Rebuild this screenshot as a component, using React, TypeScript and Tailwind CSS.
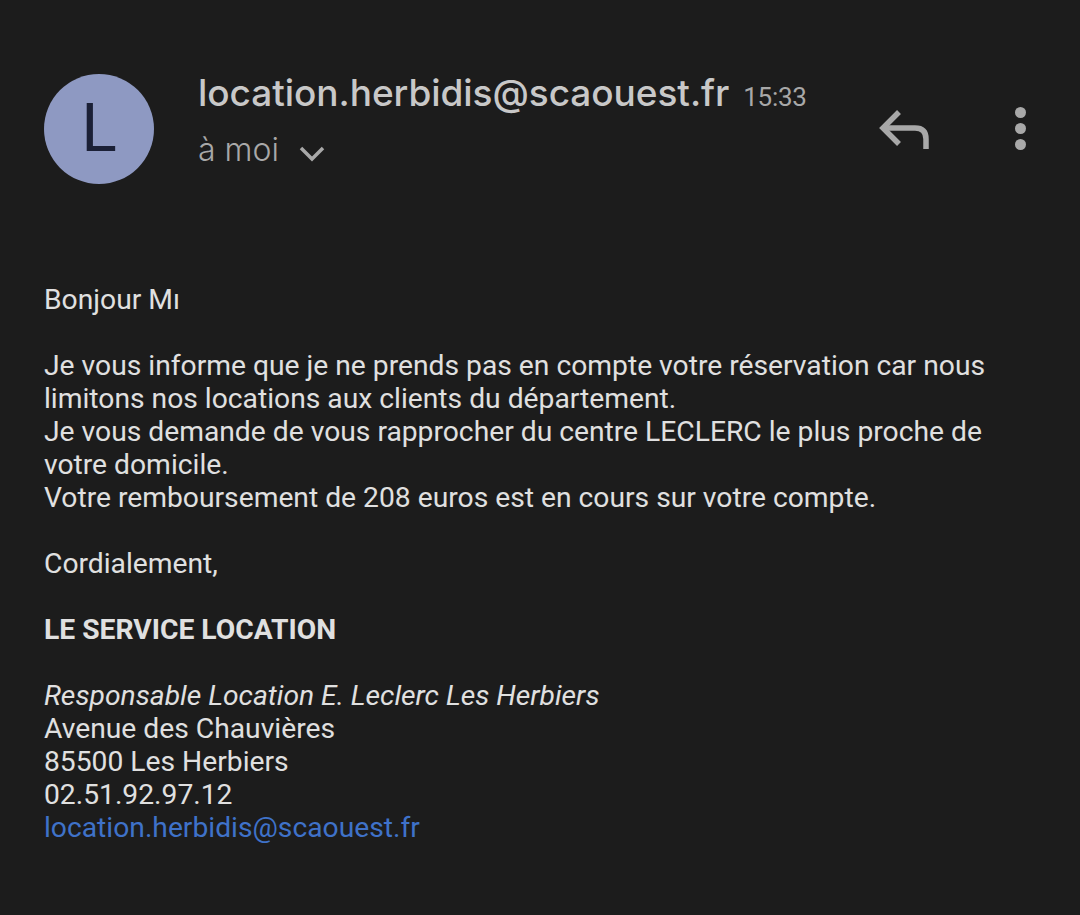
import React from 'react';

function ReplyIcon() {
  return (
    <svg width="52" height="42" viewBox="0 0 52 42" fill="none" stroke="#a8a8a8" strokeWidth="5.5">
      <path d="M20 3 L4 19 L20 35" strokeLinejoin="miter" />
      <path d="M4 19 H36 Q47 19 47 30 V40" />
    </svg>
  );
}

function MoreIcon() {
  return (
    <div className="flex flex-col gap-[5px]">
      <div className="w-[11px] h-[11px] rounded-full bg-[#a8a8a8]" />
      <div className="w-[11px] h-[11px] rounded-full bg-[#a8a8a8]" />
      <div className="w-[11px] h-[11px] rounded-full bg-[#a8a8a8]" />
    </div>
  );
}

export default function App() {
  return (
    <div className="w-[1080px] h-[915px] overflow-hidden bg-[#1c1c1c] font-['Roboto',sans-serif]">
      {/* Header */}
      <div className="flex items-start pt-[74px] pl-[44px]">
        <div className="w-[110px] h-[110px] rounded-full bg-[#8e99c2] flex items-center justify-center text-[#1b2036] text-[66px] font-normal leading-none shrink-0">
          L
        </div>
        <div className="ml-[44px] w-[640px] shrink-0 -mt-[3px]">
          <div className="flex items-baseline h-[44px]">
            <span className="font-['Inter',sans-serif] text-[37px] font-medium tracking-[-0.05px] leading-[44px] text-[#c8c8c8]">location.herbidis@scaouest.fr</span>
            <span className="ml-[14px] text-[26px] tracking-[-0.3px] leading-[44px] text-[#a8a8a8]">15:33</span>
          </div>
          <div className="flex items-center mt-[17px] h-[36px]">
            <span className="font-['Inter',sans-serif] text-[32px] font-light leading-[36px] text-[#a8a8a8]">à moi</span>
            <svg className="ml-[19px] mt-[8px]" width="28" height="18" viewBox="0 0 28 18" fill="none" stroke="#a8a8a8" strokeWidth="3.5">
              <path d="M3 3 L14 14 L25 3" />
            </svg>
          </div>
        </div>
        <div className="ml-[41px] mt-[35px]">
          <ReplyIcon />
        </div>
        <div className="ml-[84px] mt-[33px]">
          <MoreIcon />
        </div>
      </div>

      {/* Body */}
      <div className="mt-[99px] pl-[44px] text-[28.24px] leading-[33px] text-[#e0e0e0] whitespace-nowrap">
        <p>Bonjour Mı</p>
        <p className="mt-[33px]">Je vous informe que je ne prends pas en compte votre réservation car nous</p>
        <p>limitons nos locations aux clients du département.</p>
        <p>Je vous demande de vous rapprocher du centre LECLERC le plus proche de</p>
        <p>votre domicile.</p>
        <p>Votre remboursement de 208 euros est en cours sur votre compte.</p>
        <p className="mt-[33px]">Cordialement,</p>
        <p className="mt-[33px] font-bold">LE SERVICE LOCATION</p>
        <p className="mt-[33px] italic">Responsable Location E. Leclerc Les Herbiers</p>
        <p>Avenue des Chauvières</p>
        <p>85500 Les Herbiers</p>
        <p>02.51.92.97.12</p>
        <p className="text-[#3f72c9]">location.herbidis@scaouest.fr</p>
      </div>
    </div>
  );
}
